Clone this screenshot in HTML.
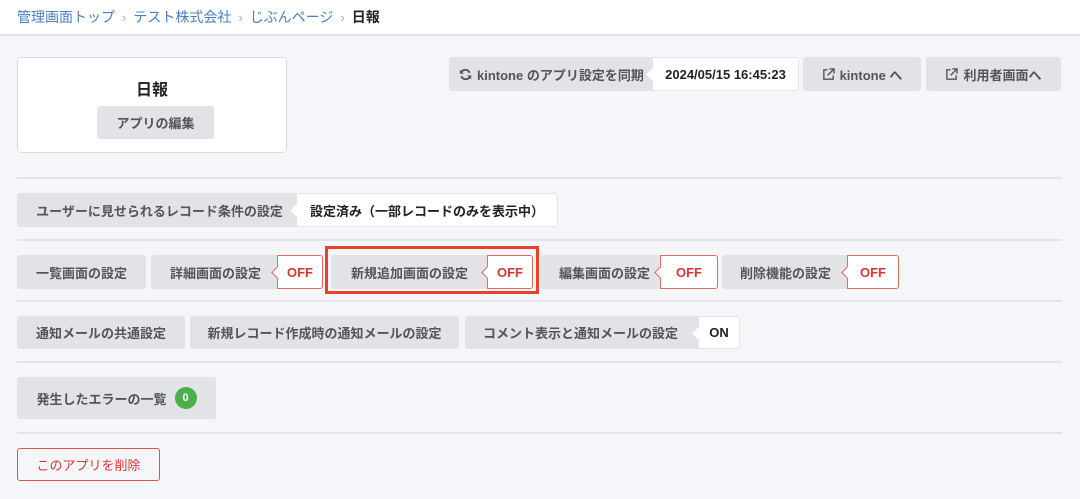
<!DOCTYPE html>
<html><head><meta charset="utf-8"><style>
*{box-sizing:border-box;margin:0;padding:0}
body{width:1080px;height:499px;background:#f5f6fa;font-family:"Liberation Sans","Noto Sans CJK JP",sans-serif;position:relative;overflow:hidden}
.hd{position:absolute;left:0;top:0;width:1080px;height:35px;background:#fff;border-bottom:1px solid #dcdde0;box-shadow:0 1px 2px rgba(0,0,0,.06)}
.bc{position:absolute;left:17px;top:7px;font-size:14px;color:#4a7fc0;white-space:nowrap}
.bc .s{color:#aaa;font-size:13px;margin:0 7px}
.bc b{color:#222}
.a{position:absolute;display:flex;align-items:center;justify-content:center;font-size:13px;font-weight:bold;color:#555;white-space:nowrap}
.g{background:#e2e3e6;border-radius:3px}
.w{background:#fff;border:1px solid #e2e3e6;border-radius:0 3px 3px 0;color:#222}
.r{background:#fff;border:1px solid #e06a66;border-radius:0 3px 3px 0;color:#d9362f}
.n::before{content:"";position:absolute;left:-5px;top:50%;width:8px;height:8px;margin-top:-4px;background:#fff;transform:rotate(45deg);border-left:1px solid transparent;border-bottom:1px solid transparent}
.r.n::before{border-left-color:#e06a66;border-bottom-color:#e06a66}
.hr{position:absolute;left:17px;width:1045px;height:2px;background:#e4e5e8}
</style></head><body>
<div class="hd"><div class="bc">管理画面トップ<span class="s">›</span>テスト株式会社<span class="s">›</span>じぶんページ<span class="s">›</span><b>日報</b></div></div>

<div style="position:absolute;left:17px;top:57px;width:270px;height:96px;background:#fff;border:1px solid #dcdde0;border-radius:4px"></div>
<div class="a" style="left:17px;top:77px;width:270px;height:22px;font-size:16px;color:#222">日報</div>
<div class="a g" style="left:97px;top:106px;width:117px;height:33px">アプリの編集</div>

<div class="a g" style="left:449px;top:57px;width:210px;height:34px;justify-content:flex-start;padding-left:10px"><svg width="13" height="13" viewBox="0 0 16 16" style="margin-right:5px"><path d="M13 6A5.5 5.5 0 0 0 3 5M3 10a5.5 5.5 0 0 0 10 1" stroke="#555" stroke-width="2.4" fill="none"/><path d="M1 2v5h5zM15 14V9h-5z" fill="#555"/></svg>kintone のアプリ設定を同期</div>
<div class="a w n" style="left:652px;top:57px;width:147px;height:34px">2024/05/15 16:45:23</div>
<div class="a g" style="left:803px;top:57px;width:118px;height:34px"><svg width="13" height="13" viewBox="0 0 14 14" style="margin-right:5px"><path d="M6 2H2v10h10V8M8 1h5v5M13 1L6 8" stroke="#555" stroke-width="1.5" fill="none"/></svg>kintone へ</div>
<div class="a g" style="left:926px;top:57px;width:135px;height:34px"><svg width="13" height="13" viewBox="0 0 14 14" style="margin-right:5px"><path d="M6 2H2v10h10V8M8 1h5v5M13 1L6 8" stroke="#555" stroke-width="1.5" fill="none"/></svg>利用者画面へ</div>

<div class="hr" style="top:177px"></div>
<div class="a g" style="left:17px;top:193px;width:285px;height:34px">ユーザーに見せられるレコード条件の設定</div>
<div class="a w n" style="left:296px;top:193px;width:262px;height:34px">設定済み（一部レコードのみを表示中）</div>

<div class="hr" style="top:239px"></div>
<div class="a g" style="left:17px;top:255px;width:129px;height:34px">一覧画面の設定</div>
<div class="a g" style="left:151px;top:255px;width:132px;height:34px;justify-content:flex-start;padding-left:19px">詳細画面の設定</div>
<div class="a r n" style="left:277px;top:255px;width:46px;height:34px">OFF</div>
<div class="a g" style="left:331px;top:255px;width:162px;height:34px;justify-content:flex-start;padding-left:20px">新規追加画面の設定</div>
<div class="a r n" style="left:487px;top:255px;width:46px;height:34px">OFF</div>
<div style="position:absolute;left:325px;top:246px;width:214px;height:48px;border:3.5px solid #e8412c"></div>
<div class="a g" style="left:540px;top:255px;width:126px;height:34px;justify-content:flex-start;padding-left:19px">編集画面の設定</div>
<div class="a r n" style="left:660px;top:255px;width:58px;height:34px">OFF</div>
<div class="a g" style="left:722px;top:255px;width:131px;height:34px;justify-content:flex-start;padding-left:18px">削除機能の設定</div>
<div class="a r n" style="left:847px;top:255px;width:52px;height:34px">OFF</div>

<div class="hr" style="top:300px"></div>
<div class="a g" style="left:17px;top:316px;width:168px;height:33px">通知メールの共通設定</div>
<div class="a g" style="left:190px;top:316px;width:269px;height:33px">新規レコード作成時の通知メールの設定</div>
<div class="a g" style="left:465px;top:316px;width:239px;height:33px;justify-content:flex-start;padding-left:18px">コメント表示と通知メールの設定</div>
<div class="a w n" style="left:698px;top:316px;width:42px;height:33px">ON</div>

<div class="hr" style="top:361px"></div>
<div class="a g" style="left:17px;top:377px;width:199px;height:42px">発生したエラーの一覧<span style="display:inline-flex;align-items:center;justify-content:center;width:22px;height:22px;border-radius:50%;background:#4cae4c;color:#fff;font-size:11px;margin-left:8px">0</span></div>

<div class="hr" style="top:432px"></div>
<div class="a" style="left:17px;top:448px;width:143px;height:33px;border:1px solid #d9534f;border-radius:3px;color:#d9362f;font-weight:normal;font-size:13px;background:#fff0">このアプリを削除</div>
</body></html>
